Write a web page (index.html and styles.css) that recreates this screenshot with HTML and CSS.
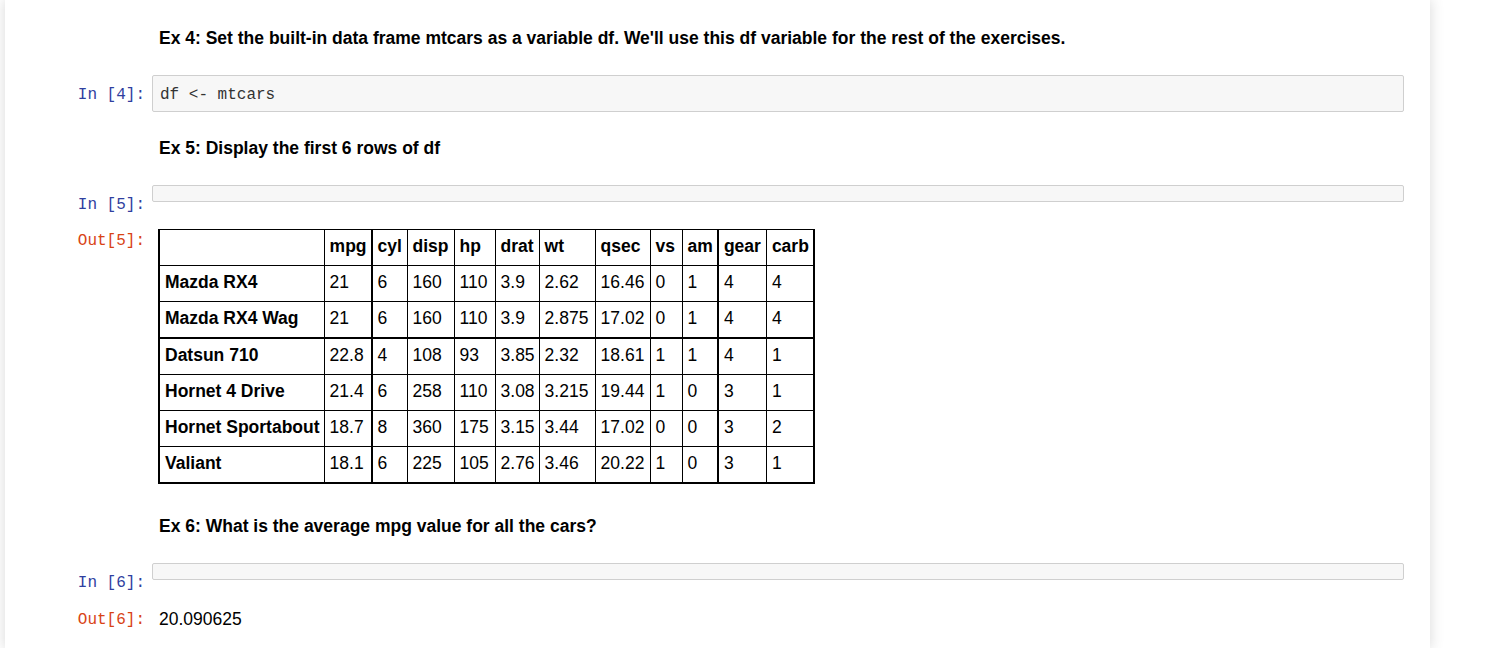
FILE: index.html
```html
<!DOCTYPE html>
<html lang="en">
<head>
<meta charset="utf-8">
<title>Notebook</title>
<link rel="stylesheet" href="styles.css">
</head>
<body>
<div class="notebook">
  <div class="cell md first">
    <div class="prompt"></div>
    <div class="md-body"><strong>Ex 4: Set the built-in data frame mtcars as a variable df. We'll use this df variable for the rest of the exercises.</strong></div>
  </div>

  <div class="cell code">
    <div class="prompt in">In&nbsp;[4]:</div>
    <div class="input"><pre>df &lt;- mtcars</pre></div>
  </div>

  <div class="cell md">
    <div class="prompt"></div>
    <div class="md-body"><strong>Ex 5: Display the first 6 rows of df</strong></div>
  </div>

  <div class="cell code">
    <div class="prompt in">In&nbsp;[5]:</div>
    <div class="input empty"></div>
  </div>

  <div class="cell out">
    <div class="prompt outp">Out[5]:</div>
    <div class="output">
      <table class="df">
        <thead>
          <tr><th class="rh"></th><th class="c-mpg">mpg</th><th class="w-cyl">cyl</th><th class="w-disp">disp</th><th class="w-hp">hp</th><th>drat</th><th class="w-wt">wt</th><th class="w-qsec">qsec</th><th class="w-vs">vs</th><th class="c-am">am</th><th class="w-gear">gear</th><th>carb</th></tr>
        </thead>
        <tbody>
          <tr><th class="rh">Mazda RX4</th><td class="c-mpg">21</td><td>6</td><td>160</td><td>110</td><td>3.9</td><td>2.62</td><td>16.46</td><td>0</td><td class="c-am">1</td><td>4</td><td>4</td></tr>
          <tr class="thick"><th class="rh">Mazda RX4 Wag</th><td class="c-mpg">21</td><td>6</td><td>160</td><td>110</td><td>3.9</td><td>2.875</td><td>17.02</td><td>0</td><td class="c-am">1</td><td>4</td><td>4</td></tr>
          <tr><th class="rh">Datsun 710</th><td class="c-mpg">22.8</td><td>4</td><td>108</td><td>93</td><td>3.85</td><td>2.32</td><td>18.61</td><td>1</td><td class="c-am">1</td><td>4</td><td>1</td></tr>
          <tr><th class="rh">Hornet 4 Drive</th><td class="c-mpg">21.4</td><td>6</td><td>258</td><td>110</td><td>3.08</td><td>3.215</td><td>19.44</td><td>1</td><td class="c-am">0</td><td>3</td><td>1</td></tr>
          <tr><th class="rh">Hornet Sportabout</th><td class="c-mpg">18.7</td><td>8</td><td>360</td><td>175</td><td>3.15</td><td>3.44</td><td>17.02</td><td>0</td><td class="c-am">0</td><td>3</td><td>2</td></tr>
          <tr><th class="rh">Valiant</th><td class="c-mpg">18.1</td><td>6</td><td>225</td><td>105</td><td>2.76</td><td>3.46</td><td>20.22</td><td>1</td><td class="c-am">0</td><td>3</td><td>1</td></tr>
        </tbody>
      </table>
    </div>
  </div>

  <div class="cell md md6">
    <div class="prompt"></div>
    <div class="md-body"><strong>Ex 6: What is the average mpg value for all the cars?</strong></div>
  </div>

  <div class="cell code">
    <div class="prompt in">In&nbsp;[6]:</div>
    <div class="input empty"></div>
  </div>

  <div class="cell out out-last">
    <div class="prompt outp">Out[6]:</div>
    <div class="output text">20.090625</div>
  </div>
</div>
</body>
</html>
```

FILE: styles.css
```css
html, body {
  margin: 0;
  padding: 0;
  background: #ffffff;
  height: 100%;
  overflow: hidden;
}

body {
  font-family: "Liberation Sans", Arial, sans-serif;
  font-size: 17.5px;
  color: #000;
}

.notebook {
  margin-left: 5px;
  width: 1425px;
  height: 648px;
  background: #fff;
  box-shadow: 0 0 12px 1px rgba(87, 87, 87, 0.2);
  padding-top: 1px;
  box-sizing: border-box;
}

.cell {
  display: flex;
  align-items: flex-start;
  padding-right: 26px;
}

.prompt {
  width: 146px;
  flex: 0 0 147px;
  box-sizing: border-box;
  padding-right: 7px;
  padding-top: 9px;
  text-align: right;
  font-family: "Liberation Mono", "DejaVu Sans Mono", monospace;
  font-size: 16px;
  line-height: 18px;
}

.prompt.in { color: #303F9F; padding-top: 11px; }
.prompt.outp { color: #D84315; padding-top: 10px; }

.md .prompt { padding-top: 0; }

.md-body {
  flex: 1;
  padding-left: 7px;
  line-height: 18px;
}

.md.first { margin-top: 28px; }
.md { margin-top: 27px; }
.md6 { margin-top: 33px; }

.code { margin-top: 28px; }
.out { margin-top: 8px; }
.out-last { margin-top: 9px; }

.input {
  flex: 1;
  background: #f7f7f7;
  border: 1px solid #cfcfcf;
  border-radius: 2px;
}

.input pre {
  margin: 0;
  padding: 10px 7px 7px;
  font-family: "Liberation Mono", "DejaVu Sans Mono", monospace;
  font-size: 16px;
  line-height: 18px;
  color: #333;
}

.input.empty { height: 15px; }

.output { flex: 1; }

.output.text {
  padding-left: 7px;
  padding-top: 9px;
  line-height: 18px;
}

table.df {
  margin-top: 7px;
  margin-left: 6px;
  border-collapse: collapse;
  border: 2px solid #000;
  border-top-width: 1px;
  font-size: 17.5px;
}

table.df th,
table.df td {
  border: 1px solid #000;
  height: 32px;
  padding: 0 4px 3px 5px;
  text-align: left;
  vertical-align: middle;
  line-height: 20px;
  white-space: nowrap;
}

table.df th { font-weight: bold; }
table.df td { font-weight: normal; }

table.df .rh { padding-right: 4px; }
table.df .c-mpg { border-right-width: 2px; }
table.df .c-am { border-right-width: 2px; }
table.df tr.thick th,
table.df tr.thick td { border-bottom-width: 2px; }

table.df .w-cyl { width: 25px; }
table.df .w-disp { width: 37px; }
table.df .w-hp { width: 31px; }
table.df .w-wt { width: 46px; }
table.df .w-qsec { width: 45px; }
table.df .w-vs { width: 22px; }
table.df .w-gear { width: 38px; }
```
